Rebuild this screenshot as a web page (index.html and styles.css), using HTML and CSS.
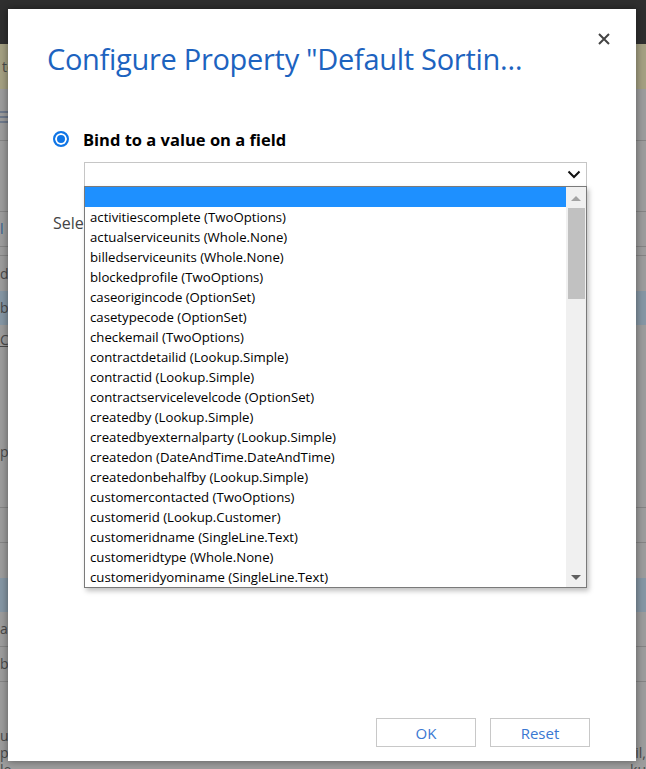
FILE: index.html
```html
<!DOCTYPE html>
<html>
<head>
<meta charset="utf-8">
<link rel="stylesheet" href="styles.css">
</head>
<body>
<div class="page">
  <div class="bg-top"></div>
  <div class="bg-notice"><span class="bg-text">te</span></div>
  <div class="bg-row bg-h52 bg-line"><div class="burger"><i></i><i></i><i></i></div></div>
  <div class="bg-row bg-h71 bg-line"></div>
  <div class="bg-row bg-h35 bg-line"><span class="bg-text bg-blue">l</span></div>
  <div class="bg-row bg-h9 bg-line"></div>
  <div class="bg-row bg-h35"><span class="bg-text">d</span></div>
  <div class="bg-row bg-h34 bg-band"><span class="bg-text">b</span></div>
  <div class="bg-row bg-h30"><span class="bg-text bg-under">C</span></div>
  <div class="bg-row bg-h82"></div>
  <div class="bg-row bg-h30"><span class="bg-text">pa</span></div>
  <div class="bg-row bg-h41 bg-line"></div>
  <div class="bg-row bg-h35 bg-line"></div>
  <div class="bg-row bg-h35"></div>
  <div class="bg-row bg-h34 bg-band"></div>
  <div class="bg-row bg-h35 bg-line"><span class="bg-text">a</span></div>
  <div class="bg-row bg-h35 bg-line"><span class="bg-text">b</span></div>
  <div class="bg-row bg-h62"><span class="bg-text">u</span></div>
  <div class="bg-row bg-h18"><span class="bg-text">p</span><span class="bg-text bg-right">il,</span></div>
  <div class="bg-row bg-h16"><span class="bg-text">le</span><span class="bg-text bg-right">ku</span></div>
  <div class="bg-row bg-h14"><span class="bg-text">ctedOptionSet_lookup Procedure</span></div>
</div>

<div class="modal">
  <button class="close" aria-label="Close">
    <svg width="12" height="12" viewBox="0 0 12 12"><path d="M1 1 L11 11 M11 1 L1 11" stroke="#444" stroke-width="2" fill="none"/></svg>
  </button>
  <h1 class="title">Configure Property "Default Sortin…</h1>
  <div class="body">
    <label class="radio-row">
      <span class="radio"></span>
      <span class="radio-label">Bind to a value on a field</span>
    </label>
    <div class="select-wrap">
      <div class="select">
        <svg class="chev" width="14" height="9" viewBox="0 0 14 9"><path d="M1.5 1.5 L7 7 L12.5 1.5" stroke="#111" stroke-width="2" fill="none"/></svg>
      </div>
      <div class="dropdown">
        <ul class="options">
          <li class="selected">&nbsp;</li>
          <li>activitiescomplete (TwoOptions)</li>
          <li>actualserviceunits (Whole.None)</li>
          <li>billedserviceunits (Whole.None)</li>
          <li>blockedprofile (TwoOptions)</li>
          <li>caseorigincode (OptionSet)</li>
          <li>casetypecode (OptionSet)</li>
          <li>checkemail (TwoOptions)</li>
          <li>contractdetailid (Lookup.Simple)</li>
          <li>contractid (Lookup.Simple)</li>
          <li>contractservicelevelcode (OptionSet)</li>
          <li>createdby (Lookup.Simple)</li>
          <li>createdbyexternalparty (Lookup.Simple)</li>
          <li>createdon (DateAndTime.DateAndTime)</li>
          <li>createdonbehalfby (Lookup.Simple)</li>
          <li>customercontacted (TwoOptions)</li>
          <li>customerid (Lookup.Customer)</li>
          <li>customeridname (SingleLine.Text)</li>
          <li>customeridtype (Whole.None)</li>
          <li>customeridyominame (SingleLine.Text)</li>
        </ul>
        <div class="scrollbar">
          <span class="arrow up"></span>
          <span class="thumb"></span>
          <span class="arrow down"></span>
        </div>
      </div>
    </div>
    <div class="select-label">Select the static value</div>
  </div>
  <div class="footer">
    <button class="btn">OK</button>
    <button class="btn">Reset</button>
  </div>
</div>
</body>
</html>
```
FILE: styles.css
```css
* { box-sizing: border-box; }
html, body { margin: 0; padding: 0; }
body {
  width: 646px;
  height: 769px;
  overflow: hidden;
  position: relative;
  background: #9d9d9d;
  font-family: "Open Sans", "Noto Sans", sans-serif;
}
.page { display: flex; flex-direction: column; }
.bg-top { height: 44px; background: #2f2f2f; }
.bg-notice {
  height: 45px;
  background: #a5a183;
  display: flex;
  align-items: center;
  padding-left: 2px;
}
.bg-row {
  display: flex;
  align-items: center;
  justify-content: space-between;
  background: #9d9d9d;
}
.bg-line { border-bottom: 1px solid #858585; }
.bg-band { background: #8697a5; }
.bg-h9 { height: 9px; }
.bg-h14 { height: 14px; }
.bg-h16 { height: 16px; }
.bg-h18 { height: 18px; }
.bg-h30 { height: 30px; }
.bg-h34 { height: 34px; }
.bg-h35 { height: 35px; }
.bg-h41 { height: 41px; }
.bg-h52 { height: 52px; }
.bg-h62 { height: 62px; align-items: flex-end; }
.bg-h71 { height: 71px; }
.bg-h82 { height: 82px; }
.bg-text {
  font-size: 14px;
  color: #4a4a4a;
  white-space: nowrap;
  line-height: 16px;
}
.bg-blue { color: #2f5f8f; }
.bg-under { text-decoration: underline; }
.bg-right { margin-left: auto; }
.burger { display: flex; flex-direction: column; gap: 3px; width: 8px; margin-top: 4px; }
.burger i { display: block; height: 2px; background: #6f7a8c; }

.modal {
  position: absolute;
  left: 8px;
  top: 9px;
  width: 628px;
  height: 752px;
  background: #fff;
  box-shadow: 0 0 8px rgba(0, 0, 0, 0.45);
  display: flex;
  flex-direction: column;
}
.close {
  position: absolute;
  right: 26px;
  top: 24px;
  width: 12px;
  height: 12px;
  padding: 0;
  border: 0;
  background: transparent;
  display: flex;
}
.title {
  margin: 0;
  padding: 28px 0 0 39px;
  font-weight: 400;
  font-size: 29px;
  letter-spacing: -0.3px;
  line-height: 44px;
  color: #1d63bf;
  white-space: nowrap;
}
.body {
  padding: 46px 0 0 45px;
  flex: 1;
}
.radio-row {
  display: flex;
  align-items: center;
  gap: 14px;
  height: 24px;
}
.radio {
  width: 16px;
  height: 16px;
  border-radius: 50%;
  border: 2px solid #0f75e6;
  background: #0f75e6;
  box-shadow: inset 0 0 0 2px #fff;
  flex: none;
}
.radio-label {
  font-weight: 700;
  font-size: 16.5px;
  color: #000;
}
.select-wrap {
  position: relative;
  margin: 11px 0 0 31px;
  width: 503px;
}
.select {
  height: 25px;
  border: 1px solid #c6c6c6;
  background: #fff;
  display: flex;
  align-items: center;
  justify-content: flex-end;
  padding-right: 5px;
}
.dropdown {
  position: absolute;
  left: 0;
  top: 24px;
  width: 503px;
  height: 402px;
  background: #fff;
  border: 1px solid #7a7a7a;
  box-shadow: 2px 3px 5px rgba(0, 0, 0, 0.25);
  display: flex;
  z-index: 2;
}
.options {
  list-style: none;
  margin: 0;
  padding: 0;
  flex: 1;
}
.options li {
  height: 20px;
  line-height: 20px;
  padding-left: 5px;
  font-size: 13.2px;
  color: #000;
  white-space: nowrap;
}
.options li.selected { background: #1e90ff; }
.scrollbar {
  width: 20px;
  background: #f0f0f0;
  display: flex;
  flex-direction: column;
  align-items: center;
}
.arrow {
  width: 0;
  height: 0;
  border-left: 5px solid transparent;
  border-right: 5px solid transparent;
  margin: 9px 0 4px;
}
.arrow.up { border-bottom: 5px solid #a3a3a3; }
.arrow.down { border-top: 5px solid #606060; margin: auto 0 7px; }
.thumb {
  width: 17px;
  height: 91px;
  background: #c1c1c1;
  margin-top: 3px;
}
.select-label {
  margin-top: 25px;
  font-size: 16px;
  color: #444;
}
.footer {
  display: flex;
  justify-content: flex-end;
  gap: 14px;
  padding: 0 46px 14px 0;
}
.btn {
  width: 100px;
  height: 29px;
  border: 1px solid #c8c8c8;
  background: #fff;
  color: #3a78d2;
  font-family: "Open Sans", "Noto Sans", sans-serif;
  font-size: 15px;
  padding: 0;
}
```
